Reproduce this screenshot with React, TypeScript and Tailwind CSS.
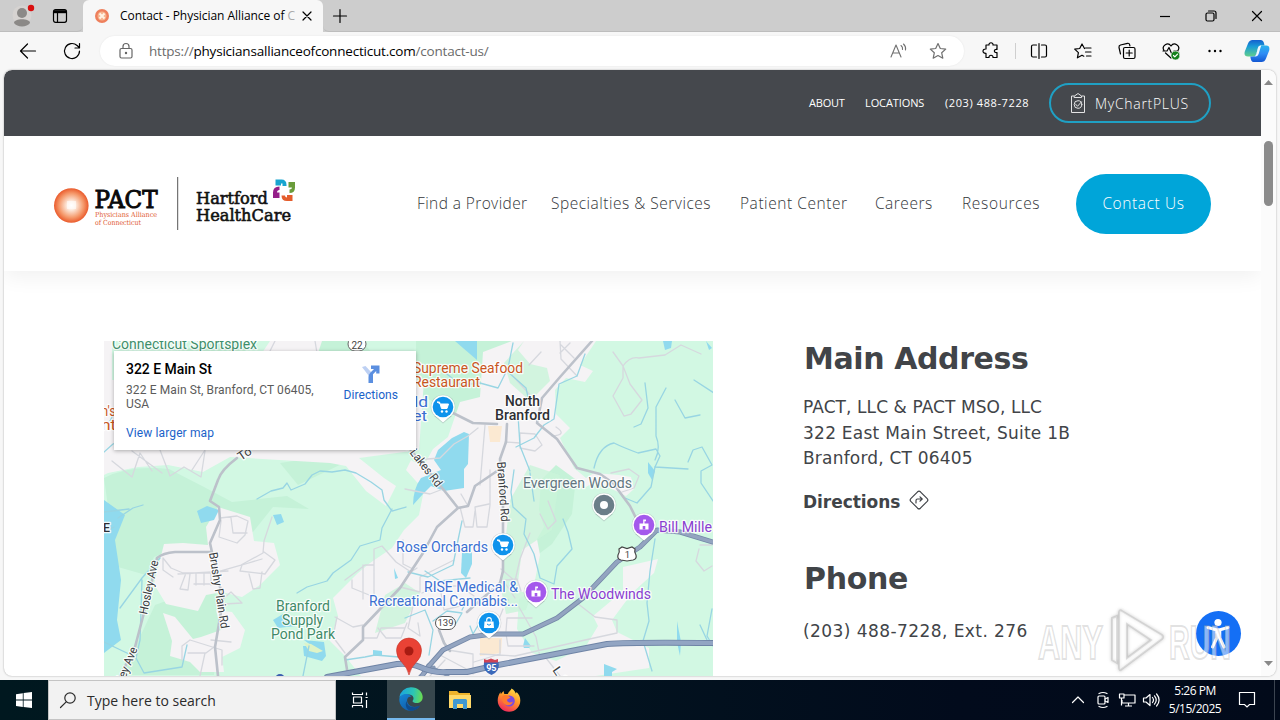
import React from 'react';

const stroke = { fill: 'none', stroke: 'currentColor', strokeWidth: 1.2, strokeLinecap: 'round', strokeLinejoin: 'round' } as const;

function Ico({ w = 20, h = 20, children, className = '' }: { w?: number; h?: number; children: React.ReactNode; className?: string }) {
  return (
    <svg width={w} height={h} viewBox={`0 0 ${w} ${h}`} className={`block shrink-0 ${className}`} {...stroke}>
      {children}
    </svg>
  );
}

function TabStrip() {
  return (
    <div className="flex h-8 items-stretch bg-[#cdcdcd] text-black">
      <div className="flex w-[83px] items-center rounded-br-md border-b border-[#bdbdbd] bg-[#cdcdcd] pl-[12px]">
        <Ico w={24} h={28}>
          <circle cx="10" cy="13" r="9.5" fill="#d6d3d1" stroke="none" />
          <circle cx="10" cy="11" r="5" fill="#8b8987" stroke="none" />
          <path d="M2 21c0-5 16-5 16 0c-3 4.500-13 4.500-16 0z" fill="#8b8987" stroke="none" />
          <circle cx="19" cy="6" r="3.200" fill="#d90f0f" stroke="none" />
        </Ico>
        <Ico w={16} h={16} className="ml-[16px]">
          <rect x="1.500" y="1.700" width="13" height="12.600" rx="2" strokeWidth="1.200" />
          <path d="M5.500 4v10" strokeWidth="1.200" />
          <path d="M2 2.200h12v3H2z" fill="currentColor" stroke="none" />
        </Ico>
      </div>
      <div className="flex w-[240px] items-center rounded-t-md bg-[#f7f7f7] pl-[12px]">
        <svg width="14" height="14" viewBox="0 0 14 14">
          <circle cx="7" cy="7" r="7" fill="#ee7f5c" />
          <circle cx="7" cy="7" r="4.500" fill="#f7b48e" />
          <path d="M4.500 4.500l5 5M9.500 4.500l-5 5" stroke="#fff3e4" strokeWidth="2" />
        </svg>
        <div className="ml-[11px] w-[175px] overflow-hidden whitespace-nowrap font-['Open_Sans','Noto_Sans',sans-serif] text-[12px] leading-4 tracking-[-0.05px]">
          Contact - Physician Alliance of <span className="text-[#aaa]">C</span>
        </div>
        <Ico w={12} h={12} className="ml-[6px]"><path d="M2 2l8 8M10 2l-8 8" /></Ico>
      </div>
      <div className="flex grow items-center rounded-bl-md border-b border-[#bdbdbd] pl-[9px]">
        <Ico w={16} h={16}><path d="M8 1.500v13M1.500 8h13" /></Ico>
        <div className="ml-auto flex items-center gap-[34px] pr-[17px]">
          <Ico w={12} h={12}><path d="M1 6.500h10" strokeLinecap="butt" /></Ico>
          <Ico w={12} h={12}><rect x="1" y="3" width="8" height="8" rx="1.500" /><path d="M3.500 1h5.500q2 0 2 2v5.500" /></Ico>
          <Ico w={12} h={12}><path d="M1.500 1.500l9 9M10.500 1.500l-9 9" /></Ico>
        </div>
      </div>
    </div>
  );
}

function Copilot() {
  return (
    <svg width="26" height="26" viewBox="0 0 26 26" className="block shrink-0">
      <defs>
        <linearGradient id="cpA" x1="0" y1="0" x2="0" y2="1"><stop offset="0" stopColor="#1460cf" /><stop offset=".4" stopColor="#1a9cd6" /><stop offset="1" stopColor="#62cf8c" /></linearGradient>
        <linearGradient id="cpB" x1="0" y1="0" x2="0" y2="1"><stop offset="0" stopColor="#2bb4ee" /><stop offset=".5" stopColor="#2f8cf5" /><stop offset="1" stopColor="#1257d2" /></linearGradient>
      </defs>
      <path d="M8.500 2h8q3 0 3.700 4l.3 1.500h-3q-2.800 0-3.600 3l-1.600 5.500q-.8 2.500-3.300 2.500H4q-4.500 0-3.200-5L4 5.500q1.300-3.500 4.500-3.500z" fill="url(#cpA)" />
      <path d="M17.500 24h-8q-2.500 0-3.200-5.500H9q2.800 0 3.500-3L14 10.500q.9-3 3.700-3h4.500q4 0 3 5L22 20.500q-1.300 3.500-4.500 3.500z" fill="url(#cpB)" />
      <path d="M14 9.500q.6-2 2.500-2h.8l-.9 2.500-1.600 5.500q-.9 3-3.400 3h-1.200q1.800-.6 2.300-3z" fill="#eef8ff" />
    </svg>
  );
}

function Toolbar() {
  return (
    <div className="flex h-[38px] items-center bg-[#f7f7f7] pl-[18px] text-black">
      <Ico><path d="M17.500 10H2.500M9.500 3L2.500 10l7 7" /></Ico>
      <Ico className="ml-[24px]"><path d="M17.500 10a7.500 7.500 0 1 1-2.400-5.500l2.400 2.300M17.500 2.500v4.500h-4.500" /></Ico>
      <div className="ml-[18px] flex h-[30px] w-[864px] items-center rounded-full bg-white pl-[16px] shadow-[0_0_2px_rgba(0,0,0,0.08)]">
        <Ico className="text-[#666]"><rect x="4" y="7.500" width="12" height="9.500" rx="1.500" /><path d="M7 7.500V5.500a3 3 0 0 1 6 0v2" /><circle cx="10" cy="12" r=".6" fill="currentColor" /></Ico>
        <div className="ml-[13px] w-[338px] whitespace-nowrap font-['Open_Sans','Noto_Sans',sans-serif] text-[13.500px] leading-5 tracking-[-0.2px] text-[#6b6b6b]">
          https://<span className="text-black">physiciansallianceofconnecticut.com</span>/contact-us/
        </div>
        <Ico className="ml-[402px] text-[#707070]"><path d="M2 16L7 4l5 12M3.700 12h6.600M12 4.500q2 1.500 1.500 4M14.500 3q2.700 2.500 2 6" strokeWidth="1.100" /></Ico>
        <Ico className="ml-[19px] text-[#707070]"><path d="M10 2.500l2.300 5 5.400.6-4 3.700 1.100 5.400L10 14.500l-4.800 2.700 1.100-5.400-4-3.700 5.400-.6z" /></Ico>
      </div>
      <Ico className="ml-[17px]"><path d="M5 4h3c-.6-3 4.600-3 4 0h4v4.500c-3.500-.5-3.500 3.500 0 3V16.500h-4c.5-3-4.500-3-4 0H5v-4.200c-4 .3-4-4.600 0-4.300z" /></Ico>
      <div className="ml-[14px] h-4 w-px bg-[#cfcfcf]" />
      <Ico className="ml-[13px]"><path d="M7.500 4H4q-1.500 0-1.500 1.500v9Q2.500 16 4 16h3.500M12.500 4H16q1.500 0 1.500 1.500v9q0 1.500-1.500 1.500h-3.500M10 2.500v15" /></Ico>
      <Ico className="ml-[24px]"><path d="M11.500 7.500L9 3 6.700 7.500l-5 .6 3.700 3.500-1 5.200L9 14.200l1.800 1M12.500 7h5.500M12.500 11h5.500M13.500 15h4.500" /></Ico>
      <Ico className="ml-[24px]"><path d="M3.500 13L2 6.500Q1.700 4.500 3.500 4l7-1.700q1.800-.3 2.200 1.500l.2 1M8 6.500h8.500q1.500 0 1.500 1.500v8q0 1.500-1.500 1.500H8q-1.500 0-1.500-1.500V8q0-1.500 1.500-1.500zM12.200 9v6M9.200 12h6" /></Ico>
      <Ico className="ml-[24px]"><path d="M3 9.500c-3-5 4-9 7-4.500 3-4.500 10-.5 7 4.500M4.500 12l5.500 5M2 10h4l2-3.500 3 7 2-3.500h4" /><circle cx="14.500" cy="14.500" r="4.500" fill="#14801c" stroke="#f7f7f7" strokeWidth=".7" /><path d="M12.500 14.500l1.300 1.400 2.700-2.700" stroke="#fff" /></Ico>
      <Ico className="ml-[24px]"><g fill="currentColor" stroke="none"><circle cx="4.500" cy="10" r="1.200" /><circle cx="10" cy="10" r="1.200" /><circle cx="15.500" cy="10" r="1.200" /></g></Ico>
      <div className="ml-[19px]"><Copilot /></div>
    </div>
  );
}

function PactLogo() {
  return (
    <svg width="246" height="56" viewBox="52 176 246 56" className="block shrink-0">
      <defs>
        <radialGradient id="sun"><stop offset="0" stopColor="#fff" /><stop offset=".25" stopColor="#fdece0" /><stop offset=".7" stopColor="#f59a6c" /><stop offset="1" stopColor="#ea5a2b" /></radialGradient>
      </defs>
      <circle cx="71.300" cy="205.500" r="17.300" fill="url(#sun)" />
      <rect x="67" y="201" width="9" height="8" fill="#fff" opacity=".5" />
      <g fontFamily="'DejaVu Serif', serif">
        <text x="94.500" y="207.500" fontSize="24" fill="#0a0a0a" stroke="#0a0a0a" strokeWidth="1" textLength="63" lengthAdjust="spacingAndGlyphs">PACT</text>
        <text x="95" y="216.800" fontSize="7" fill="#e0582f" textLength="62" lengthAdjust="spacingAndGlyphs">Physicians Alliance</text>
        <text x="95" y="224.600" fontSize="7" fill="#e0582f" textLength="46" lengthAdjust="spacingAndGlyphs">of Connecticut</text>
        <text x="196" y="204" fontSize="17" fill="#111" stroke="#111" strokeWidth=".6" textLength="72" lengthAdjust="spacingAndGlyphs">Hartford</text>
        <text x="196" y="220.500" fontSize="17" fill="#111" stroke="#111" strokeWidth=".6" textLength="95" lengthAdjust="spacingAndGlyphs">HealthCare</text>
      </g>
      <path d="M177.700 177v53" stroke="#555" strokeWidth="1" />
      <path d="M275.500 179.500h6q5 0 5 5.500v1h-4v-2.500h-1.500v2h-5.500z" fill="#18a5d0" />
      <path d="M288.500 182h6.500v5.500q0 5.500-5.500 5.500v-3.500q2.500 0 2.500-2h-3.500z" fill="#6a9c3b" />
      <path d="M279.500 186.500v3.500q-2.500 0-2.500 2.500h2.500v5.500h-6.500v-5.500q0-6 6.500-6z" fill="#951f89" />
      <path d="M292.500 195v6h-5.500q-5.500 0-5.500-5.500h3.500q0 2 2 2V195z" fill="#e45d2c" />
    </svg>
  );
}

function SiteTop() {
  return (
    <div className="relative z-10 flex h-[66px] shrink-0 items-center rounded-tl-lg bg-[#45484d] pl-[805px] font-['Open_Sans','Noto_Sans',sans-serif] text-[11px] text-white">
      <span className="w-[56px] whitespace-nowrap tracking-[-0.2px]">ABOUT</span>
      <span className="w-[80px] whitespace-nowrap tracking-[-0.1px]">LOCATIONS</span>
      <span className="w-[104px] whitespace-nowrap tracking-[0.6px]">(203) 488-7228</span>
      <div className="flex h-10 w-[162px] items-center rounded-full border-2 border-[#1fa0c4] pl-[18px]">
        <Ico w={18} h={22} className="opacity-85"><path d="M5 4H2.500v16.500h13V4H13M5.500 5.500h7V4L9 1.500 5.500 4zM6.500 12l2 2.300 4-4.500" strokeWidth="1" /><circle cx="9" cy="12.500" r="3.800" strokeWidth="1" /></Ico>
        <span className="ml-[8px] whitespace-nowrap text-[14px] font-light tracking-[0.7px]">MyChartPLUS</span>
      </div>
    </div>
  );
}

function SiteHeader() {
  return (
    <div className="flex h-[135px] shrink-0 items-center bg-white pl-[48px] font-['Open_Sans','Noto_Sans',sans-serif] text-[15.500px] font-light text-[#33363a] shadow-[0_6px_20px_rgba(0,0,0,0.06)]">
      <PactLogo />
      <nav className="ml-[119px] flex whitespace-nowrap">
        <span className="w-[134px] tracking-[0.4px]">Find a Provider</span>
        <span className="w-[189px] tracking-[0.5px]">Specialties &amp; Services</span>
        <span className="w-[135px] tracking-[0.55px]">Patient Center</span>
        <span className="w-[87px] tracking-[0.5px]">Careers</span>
        <span className="w-[114px] tracking-[0.65px]">Resources</span>
      </nav>
      <div className="flex h-[60px] w-[135px] items-center justify-center whitespace-nowrap rounded-full bg-[#00a5d9] tracking-[0.6px] text-white">Contact Us</div>
    </div>
  );
}

function Pin({ x, y, color, kind }: { x: number; y: number; color: string; kind: string }) {
  return (
    <g transform={`translate(${x} ${y})`}>
      <path d="M-9 9L0 16.500 9 9z" fill="#7d8b90" opacity=".35" />
      <circle r="12.300" fill="#7d8b90" opacity=".3" />
      <path d="M-8.500 8L0 15.500 8.500 8z" fill="#fff" />
      <circle r="11.700" fill="#fff" />
      <circle r="10.300" fill={color} />
      {kind === 'cart' && <g><path d="M-6-5h2.500l2 6.500h5.500l1.500-4.500h-8z" fill="#fff" stroke="#fff" strokeWidth="1" strokeLinejoin="round" /><circle cx="-1" cy="4.500" r="1.200" fill="#fff" /><circle cx="3.500" cy="4.500" r="1.200" fill="#fff" /></g>}
      {kind === 'dot' && <circle r="4" fill="#fff" />}
      {kind === 'civic' && <g><path d="M-4.500-1.500h9V4.500h-9zM-.8-1.500V-5.500H2v1.800H.5v2.200z" fill="#fff" /><rect x="-1.300" y="1" width="2.600" height="3.500" fill={color} /></g>}
      {kind === 'bag' && <g><path d="M-4.500-1.500h9l.5 6.500h-10z" fill="#fff" /><path d="M-2.300-1.500v-1.500a2.300 2.300 0 0 1 4.600 0v1.500" fill="none" stroke="#fff" strokeWidth="1.200" /><path d="M-2 1q2 2.500 4 0" fill="none" stroke={color} /></g>}
    </g>
  );
}

function L({ x, y, w, c, s = 14, children, b = false, t }: { x: number; y: number; w: number; c: string; s?: number; children: string; b?: boolean; t?: string }) {
  return (
    <text x={x} y={y} textLength={w} lengthAdjust="spacingAndGlyphs" fontSize={s} fill={c} fontWeight={b ? 500 : 400} stroke="#fff" strokeOpacity=".85" strokeWidth="2.500" paintOrder="stroke" strokeLinejoin="round" transform={t}>
      {children}
    </text>
  );
}

const built = [
  'M104 341h8v40h-8zM104 380h320l-5 70-60 8 25 20 12 8-10 20-20-15-20-25-16-3-100-6-27 15-35-7-30 2-30 6-14 7z',
  'M270 341h52l-4 12h-56z',
  'M512 341h84l-16 24 13 6-8 11-19 -4-11 12 1 24 14 14-10 10 14 30 12 10 8-5 25 2 12 2 3 12-8 7-30-15-10 6-30-22-15 15-2 30 5 17-7 12 3 16-7 35-14 9-2 30 15 24 24 8 30-15 12-20-5-10 30-25 0-24 35-8-4 14-22 20-20 27 5 12 32 16 0 20-80 12-65 13-15 12h-52l-110 0 5-15 33-9-20-25-15-15 8-25-5-18 25-25 12-10 22-15 12-18 15-15 5-25-18-20 5-10 12 7 10-18 15-12 12-35 20-5 3-45z',
  'M183 543l25 2-2-18 12-20 32 10 4 24 20 2 6 22-20 20-18 12-20-5-16 3-8 16-32-7-12-20 10-40z',
  'M163 613l12 4 18 22 8-2 20-7-5-20 16 2 13 18-5 18-18 9 2 15h-24l-10-10-20-6 2-15z',
];
const woods = [
  'M104 478q25-13 65-9l35 18 28 15 55-6 22 13-36-2-20 25-31 6-9 8-30 0-29 11-8 18-28-8-5-25z',
  'M225 341h30l-20 20-110 0zM320 341h42l10 12h-62z',
  'M416 341h95l-6 60-14 25-40-14-35-20z',
  'M517 467l25-8 35 10-5 45-20 30-20 15-17-45z',
  'M155 605l55-20 10 15-6 75h-92z',
  'M280 463l40-6 28 4-50 24z',
];
const water = [
  'M104 500l21 15-10 25 6 40-4 40 4 20-17 13z',
  'M197 511l10-5 12 4-5 10-13 3z', 'M273 515l8-1 3 8-7 3z',
  'M464 432l5 2-1 30-4 5 0 19-20 3-13-5-8 8-10 11q0-16 8-27l20-8-7-10 4-10 14-12z',
  'M455 341h22v19l-14-12z', 'M663 341h9l-1 7-6 2z', 'M706 341l6 7-3 2z',
  'M462 553l10-1 0 12-6 14-5-5z', 'M304 640l20 2 2 14-4 5-18-5-1-10 9 0z',
  'M273 620l10-6 13 12-18 2z', 'M523 646l2-8 6 8-2 2h-5z',
  'M604 664l13 5-5 3 0 4h-8z', 'M677 621l4 21-1 14-3-14z', 'M394 568l4 10-3 1z',
  'M373 650l9 1 0 4-9 0z', 'M648 462l7 9-3 9-4-7z',
];
const creeks = [
  'M257 499l14-8 12-3 4-5 4 7 14-6 7-9 8-4 12 1 13-2 11 3 15 9 11 8 2 10 8 11 14-4',
  'M392 509l-10 19-2 12-20 6-9 14-18 13-6 8-20 6-10 6',
  'M104 532l10-5M118 518l15-10 10-3M104 512l25-3M104 424l6-3 4-8M104 452l9-8 12-4',
  'M513 343l-5 25-10 20-18-5-19 2-22-17M508 372l18 16 4 18M585 354l-8 22-18 8-5 35-10 6-10 13-18 9M518 415l2 31 10 25',
  'M530 473l4 28M514 470l-3 22 2 15 13 12-2 15 10 20 6 24 14 6 3-18 15-17-4-17-5-13',
  'M594 468q5-22 20-25 8 4 24 10l18-4 4 7-5 11 33 2M655 460q6-12 1-24v-29l10-19M645 383l3 25-7 16-7 3M675 400l10 18 15-3M694 380l20 13',
  'M688 462l5-12 9-3 10 18-11 6 0 12 12 18M655 467l-4 20-14 16-12-5M655 539l-5 32-3 32 2 18-6 20 9 30',
  'M712 609l-5 27 6 10M700 625l7 15M120 608l22-30 18-20M142 580l-2 60-4 18 8 15 38-6 5-22M104 642l25 12',
  'M345 660l20-3 10-2 24 2 18-5M405 618l20-8 8 20-4 25M433 621l14-10 15 2-7 12M303 676l6-30M408 572l20 5 25-12 4-20 5-24',
  'M462 610l6-12 40 2M425 571l15 10 30-3M480 622l-7 12-3-8',
];
const lanes = [
  'M112 461l20 16 8-24 12 18M132 451l30 22M160 450l10 26 14-9 17 10 4-26M205 450l-13 20',
  'M220 518l17-2 11 5-3 14-8 8-18-6 2-16M231 518l2 15h14M272 517l-8 24-1 12-22 12-28 8-30 0-12-5-8-10 0 12 10 7M264 552l11 8-10 14-25-3 2-6 20-6M249 574l4 15 7-1 2-16M178 574l50-3M186 573l-6 16 8 1 2-16M196 573v12M204 573v12M211 573v12M218 573v11h-24',
  'M182 660v-14l8-6 32 10 0 15M188 653l18 0 8-6M200 676l5-23M216 605l15-13 11 11-18 1M211 640l20 2',
  'M345 580l20-15 9 0v32l-22-9 0-8M363 565v34M374 565v-16l8-3 14 16 15 10 6-4M337 617l-4 20 12 16M335 617l18 10 10-2M364 638h13l4-10 24 0M378 628l8 10 15 0 6-15',
  'M415 460l25-2 14-14 14-8 10-8M530 395l-18-20M541 352l-12 13M560 353l10-10M574 358l-13-13M560 341l1 18 16 17M556 427q12 8-4 9M520 433v15l15 3 7-6-7-11zM505 442l15 1M503 415l16 5',
  'M613 352l10 14 0 12-10 18 11 20 7-2 11-14-12-16-7-18q7-10 16-8l26-3 16-10 20 9',
  'M485 425l-5 60M490 470v35l-3 22h-10l-2-20 14-3M460 507l5 20h8l2-16M443 489l-13 5-25-5M468 506l-7-12M444 490l10 12',
  'M611 473l18-4 10 7-5 12-12 4M548 501l8 20-8 8-8-15M530 533l-10 26-5 22-14-12M505 580l12-1 4 12M503 580l12 18',
  'M422 593l18-7 20 0 14 10M400 587l20 5 0-15 14-7 20-10M413 606l-5 22 12 8-2-13M440 587l4 23 16-4M403 540v24l10 5',
  'M439 630l9 20 25 4 0 20M503 609l-10 25M519 607l17 30 4 20M507 618h25M507 618l-1 13M506 634l2 12h26M480 654l35 2 70-16 32-7 0-13-22-3-18-14M440 655l34 18M546 658l14 18M500 640v14l-26 8',
  'M700 545h12M699 549l-3 12 8 10 8-5M275 341l-6 12M315 341l2 12M430 676l15-16',
];
const roads = [
  'M237 458q-16 12-19 22l-8 21 9 6 1 13-10 23 3 14 10 43-8 47 3 29',
  'M210 552h-35q-12 1-18 6l-7 32-15 57-15 29',
  'M592 341l-32 36-18 21-5 25 20 16 20 29 23 6 13 9 17 23 7 14',
  'M443 404l10 9 20 10 24 1M507 424l-1 18-6 17 3 44v68l-3 12-33 29',
  'M410 449l33 40 15 19 10-2 7-20 25-17M458 508l-21 19-14 26-23 35-37 39v13l-18 17 3 19',
  'M439 630l5 13 6 8',
];
const us1 = 'M422 676l6-9 15-17 27-13 23-3h30l34-16 26-20 34-36 23-15 17-17 23 2 33 10';
const i95 = 'M327 677l70-13q14-1 23 3 13 6 27 5h20l26-6 47-9 67-13q25-2 106-1';

function MapArt() {
  return (
    <svg width="609" height="335" viewBox="104 341 609 335" className="block" fontFamily="Roboto, 'Liberation Sans', sans-serif">
      <rect x="104" y="341" width="609" height="335" fill="#d2f8e3" />
      {woods.map((d) => <path key={d} d={d} fill="#c5f2d8" />)}
      {built.map((d) => <path key={d} d={d} fill="#f5f3f5" />)}
      <path d="M524 341l-20 22 6 20 20 18 20-20-3-13-17-4-12-14zM385 595l20-12 15 10-15 30-30 10zM510 500l20-35 30 10-8 55-30 20-5 40 14 5-5 15-20 4-6-30 5-40z" fill="#c9f4da" opacity=".8" />
      <path d="M488 426h14l-2 16h-10zM480 638h22l-1 15-21 3z" fill="#fbe9d2" />
      {water.map((d) => <path key={d} d={d} fill="#90daee" />)}
      <path d="M304 643l7 1 12 7-6 2-8-2z" fill="#dff3c6" />
      <g fill="none" strokeLinejoin="round" strokeLinecap="round">
        {lanes.map((d) => <path key={d} d={d} stroke="#d6d8de" strokeWidth="1.300" />)}
        {creeks.map((d) => <path key={d} d={d} stroke="#98d5e3" strokeWidth="1.300" />)}
        {roads.map((d) => <path key={d} d={d} stroke="#bcc1ca" strokeWidth="2.600" />)}
        <path d="M428 665l20 11M420 676l14-9" stroke="#8799b5" strokeWidth="3" />
        <path d={us1} stroke="#7488a8" strokeWidth="5" /><path d={us1} stroke="#93a4c0" strokeWidth="3.400" />
        <path d={i95} stroke="#6f84a6" strokeWidth="6" /><path d={i95} stroke="#92a5c3" strokeWidth="4.200" />
      </g>
      <L x={112} y={349} w={145} c="#3f8f6b">Connecticut Sportsplex</L>
      <L x={413} y={373} w={110} c="#c9561e">Supreme Seafood</L>
      <L x={413} y={387} w={67} c="#c9561e">Restaurant</L>
      <L x={408} y={407} w={20} c="#3b6fd1">rld</L>
      <L x={404} y={421} w={23} c="#3b6fd1">ket</L>
      <L x={505} y={406} w={35} c="#2d2f33" b>North</L>
      <L x={495} y={420} w={55} c="#2d2f33" b>Branford</L>
      <L x={523} y={488} w={109} c="#627680">Evergreen Woods</L>
      <L x={659} y={532} w={53} c="#8a3fd0">Bill Mille</L>
      <L x={396} y={552} w={92} c="#3b6fd1">Rose Orchards</L>
      <L x={424} y={592} w={94} c="#3b6fd1">RISE Medical &amp;</L>
      <L x={369} y={606} w={149} c="#3b6fd1">Recreational Cannabis...</L>
      <L x={551} y={599} w={100} c="#8a3fd0">The Woodwinds</L>
      <L x={276} y={611} w={54} c="#3f8a68">Branford</L>
      <L x={282} y={625} w={41} c="#3f8a68">Supply</L>
      <L x={271} y={639} w={64} c="#3f8a68">Pond Park</L>
      <L x={94} y={416} w={22} c="#c9561e">an's</L>
      <L x={92} y={430} w={24} c="#c9561e">ant</L>
      <L x={103} y={532} w={7} c="#2d2f33" s={12} b>E</L>
      <L x={0} y={0} w={14} c="#3a3d42" s={12} t="translate(241 461) rotate(-34)">To</L>
      <L x={0} y={0} w={53} c="#3a3d42" s={12} t="translate(404 446) rotate(52)">h Lakes Rd</L>
      <L x={0} y={0} w={60} c="#3a3d42" s={12} t="translate(497 462) rotate(86)">Branford Rd</L>
      <L x={0} y={0} w={55} c="#3a3d42" s={12} t="translate(147 615) rotate(-78)">Hosley Ave</L>
      <L x={0} y={0} w={55} c="#3a3d42" s={12} t="translate(117 700) rotate(-68)">Hosley Ave</L>
      <L x={0} y={0} w={77} c="#3a3d42" s={12} t="translate(209 553) rotate(81)">Brushy Plain Rd</L>
      <L x={0} y={0} w={20} c="#3a3d42" s={12} t="translate(552 670) rotate(55)">L S</L>
      <g fontSize="9.500" fill="#444" textAnchor="middle">
        <rect x="348" y="337" width="18" height="14" rx="7" fill="#fff" stroke="#666" /><text x="357" y="348.500" fontSize="10">22</text>
        <rect x="435.500" y="616.500" width="20" height="13" rx="6.500" fill="#fff" stroke="#555" /><text x="445.500" y="626.300">139</text>
        <path d="M619 549l3-2 5 1.500 5-1.500 3 2q-1 3 1 6 1 4-3 5l-6 1-6-1q-4-1-3-5 2-3 1-6z" fill="#fff" stroke="#444" strokeWidth="1.200" />
        <text x="627.500" y="558">1</text>
      </g>
      <path d="M484 662q-2 9 7.500 13 9-4 7-13z" fill="#3b68ba" /><path d="M484 659l3 1 4-1.500 4 1.500 3-1v3.500h-14z" fill="#cf4355" />
      <text x="491.300" y="671" textAnchor="middle" fontSize="9" fontWeight="700" fill="#fff">95</text>
      <circle cx="280" cy="679" r="5" fill="#3b5fae" />
      <Pin x={443} y={407} color="#0f93ec" kind="cart" />
      <Pin x={604} y={505} color="#6b7e89" kind="dot" />
      <Pin x={644} y={525} color="#a458ec" kind="civic" />
      <Pin x={503} y={545} color="#0f93ec" kind="cart" />
      <Pin x={536} y={592} color="#a458ec" kind="civic" />
      <Pin x={489} y={623} color="#0f93ec" kind="bag" />
      <path d="M409 675q-1.500-7-7-12.500-5.500-5-5.500-12a12.500 12.500 0 0 1 25 0q0 7-5.500 12-5.500 5.500-7 12.500z" fill="#e94235" stroke="#c5352a" strokeWidth=".6" />
      <circle cx="409" cy="651" r="4.500" fill="#a81b12" />
    </svg>
  );
}

function PlaceCard() {
  return (
    <div className="absolute left-[10px] top-[10px] flex h-[99px] w-[302px] justify-between bg-white pl-3 pr-[18px] pt-[9px] font-[Roboto,'Liberation_Sans',sans-serif] text-[12px] shadow-[0_1px_4px_rgba(0,0,0,0.3)]">
      <div className="w-[200px] whitespace-nowrap">
        <div className="text-[14px] font-medium leading-[18px] tracking-[-0.05px] text-black">322 E Main St</div>
        <div className="mt-[5px] leading-[14px] tracking-[0.11px] text-[#5b5b5b]">322 E Main St, Branford, CT 06405,<br />USA</div>
        <div className="mt-[15px] leading-[14px] tracking-[0.12px] text-[#1a62c9]">View larger map</div>
      </div>
      <div className="flex flex-col items-center text-[#1a62c9]">
        <svg width="20" height="20" viewBox="0 0 20 20" className="mt-[4px]">
          <path d="M1 3l3.500-1 6 6.500-3 3z" fill="#bdd0f3" />
          <path d="M7.500 19v-6q0-2.500 2-4.500l3.500-3.500h-3V1.500h8.500v8h-3.300V7l-3.200 3.200V19z" fill="#5b8fe0" />
        </svg>
        <span className="mt-[4px] leading-[14px] tracking-[0.05px]">Directions</span>
      </div>
    </div>
  );
}

function Contact() {
  return (
    <div className="ml-[90px] whitespace-nowrap pt-px font-['DejaVu_Sans',sans-serif] text-[#414448]">
      <h1 className="pl-px text-[30px] font-bold leading-[34px] tracking-[-0.4px]">Main Address</h1>
      <p className="mt-[19px] text-[17px] leading-[25.500px]">
        <span className="tracking-[0.08px]">PACT, LLC &amp; PACT MSO, LLC</span><br />
        <span className="tracking-[0.25px]">322 East Main Street, Suite 1B</span><br />
        <span className="tracking-[0.2px]">Branford, CT 06405</span>
      </p>
      <div className="mt-[17px] flex items-center text-[17px] font-bold leading-[26px]">
        <span className="w-[106px] tracking-[-0.05px]">Directions</span>
        <Ico w={20} h={20} className="-mt-[4px]"><path d="M8.600 1.800Q10 .5 11.400 1.800l6.800 6.800q1.300 1.400 0 2.800l-6.800 6.800q-1.400 1.300-2.800 0l-6.800-6.800q-1.300-1.400 0-2.800zM7 13v-2.500Q7 9 8.500 9H13M11 6.800L13.200 9 11 11.200" /></Ico>
      </div>
      <h1 className="mt-[47px] pl-px text-[30px] font-bold leading-[34px] tracking-[-0.3px]">Phone</h1>
      <p className="mt-[23px] text-[17px] leading-[25.500px] tracking-[0.43px]">(203) 488-7228, Ext. 276</p>
    </div>
  );
}

function ScrollRail() {
  return (
    <div className="flex w-[15px] shrink-0 flex-col items-center rounded-r-lg bg-[#fbfbfb] py-[10px]">
      <svg width="9" height="5" viewBox="0 0 9 5"><path d="M4.500 0L9 5H0z" fill="#888" /></svg>
      <div className="mt-[56px] h-[65px] w-[9px] rounded-full bg-[#8b8b8b]" />
      <svg width="9" height="5" viewBox="0 0 9 5" className="mt-auto"><path d="M4.500 5L9 0H0z" fill="#888" /></svg>
    </div>
  );
}

function Overlay() {
  return (
    <svg width="210" height="70" viewBox="1032 606 210 70" className="absolute left-[1032px] top-[606px]" fontFamily="'Liberation Sans', sans-serif">
      <defs><filter id="glow" x="-10%" y="-20%" width="120%" height="140%"><feGaussianBlur stdDeviation="1.500" /></filter></defs>
      <circle cx="1218.500" cy="633.500" r="22.500" fill="#146ff5" />
      <circle cx="1218" cy="622.500" r="3.600" fill="#fff" />
      <path d="M1208 627.500l8 2.200h4l8-2.200M1216.800 630v8l-4.300 9M1219.800 630v8l4.300 9" fill="none" stroke="#fff" strokeWidth="3" strokeLinecap="round" strokeLinejoin="round" />
      <path d="M1216 629h5v9h-5z" fill="#fff" />
      <g fill="none" stroke="#8f8f8f" strokeOpacity=".4" strokeWidth="2.500" filter="url(#glow)">
        <path d="M1122 611l40 24q2 2 0 4l-40 30q-3 3-3-2v-54q0-4 3-2zM1127 624v34l24-18zM1112 618v42l6 3M1112 618l6-2" />
      </g>
      <g fill="#fff" fillOpacity=".5" stroke="#a4a4a4" strokeOpacity=".32" strokeWidth="2" fontSize="48" fontWeight="700">
        <text x="1038" y="659" textLength="65" lengthAdjust="spacingAndGlyphs">ANY</text>
        <text x="1169" y="659" textLength="62" lengthAdjust="spacingAndGlyphs">RUN</text>
        <path d="M1122 611l40 24q2 2 0 4l-40 30q-3 3-3-2v-54q0-4 3-2zM1127 624v34l24-18z" fillRule="evenodd" />
        <path d="M1112 618l5-2v47l-5-3z" />
      </g>
    </svg>
  );
}

function EdgeLogo() {
  return (
    <svg width="24" height="24" viewBox="0 0 24 24">
      <defs>
        <linearGradient id="eg1" x1="0" x2="1" y1=".3" y2=".4"><stop offset="0" stopColor="#1ba3e0" /><stop offset=".6" stopColor="#2cc5b4" /><stop offset="1" stopColor="#69db52" /></linearGradient>
        <linearGradient id="eg2" x1="0" x2=".7" y1="0" y2="1"><stop offset="0" stopColor="#1686d5" /><stop offset="1" stopColor="#1159a6" /></linearGradient>
      </defs>
      <path d="M.3 11A11.700 11.700 0 0 1 12 .3c7 0 11.700 5 11.700 9.700 0 4-3 6-6 6-3.500 0-4.500-1.500-4-2.200 2-2.500.3-6.300-3.700-6.300C5 7.500 1.500 9 .3 11z" fill="url(#eg1)" />
      <path d="M.3 12C1 8 6 6 9.500 7.500c2 .8 3 2 3 2-4 0-5 3-4 6 1.500 4 6.500 6 12.500 3C18 23 14.500 23.700 11 23.700 5 23.500 0 18.500.3 12z" fill="url(#eg2)" />
      <path d="M8 14c-1 5 6 8.500 13 4.500-2 4-6 5.300-9.500 5.200C6 22 6 16 8 14z" fill="#104b8c" />
    </svg>
  );
}

function FirefoxLogo() {
  return (
    <svg width="24" height="24" viewBox="0 0 24 24">
      <defs><linearGradient id="ff" x1=".8" x2=".3" y1="0" y2="1"><stop offset="0" stopColor="#ffe14a" /><stop offset=".45" stopColor="#ff9a2a" /><stop offset="1" stopColor="#f0265c" /></linearGradient></defs>
      <path d="M14.500.5c3 1.500 4 4 4.200 5 .8-.4.800-1.500.8-1.500C22 6 23.300 9 23.300 12.500A11.200 11.200 0 0 1 12 23.700 11.300 11.300 0 0 1 .7 12.500C.7 9 2 6 3.500 4c0 1 .4 2 .4 2L6.500 3l.8 3h3.500C12 3 14 2.500 14.500.5z" fill="url(#ff)" />
      <circle cx="12.300" cy="13" r="5.500" fill="#7a4be0" />
      <path d="M5.500 8c2-1.500 4.500-1 6 0l2 1.500c-1 1.200-3 1-3.500 2.500 0 2.500 3.500 3.500 6 1.500-1 4-6.500 5-9 2-2-2-2.500-5-1.500-7.500z" fill="#ff7b2e" />
    </svg>
  );
}

function Taskbar() {
  return (
    <div className="flex h-10 bg-[linear-gradient(90deg,#00181f_0%,#02131f_45%,#020b1c_75%,#020a1a_100%)] font-['Open_Sans','Noto_Sans',sans-serif] text-white">
      <div className="flex w-12 items-center justify-center">
        <svg width="16" height="16" viewBox="0 0 16 16"><path d="M0 2.200l6.800-1v6.400H0zM7.600 1.100L16 0v7.600H7.600zM0 8.400h6.800v6.500L0 13.900zM7.600 8.400H16V16l-8.400-1.100z" fill="#fff" /></svg>
      </div>
      <div className="flex w-[288px] items-center border border-[#c4c4c4] bg-[#f2f2f2] pl-[10px] text-[#2b2b2b]">
        <Ico w={18} h={18}><circle cx="11" cy="7" r="5.200" /><path d="M7.200 10.800L1.500 16.500" /></Ico>
        <span className="ml-[10px] whitespace-nowrap text-[14px]">Type here to search</span>
      </div>
      <div className="flex w-[51px] items-center justify-center pr-[4px]">
        <Ico w={18} h={18}><path d="M1.500 1.500v2h10v-2M1.500 16.500v-2h10v2M2.500 6h8v6h-8zM15.500 1.500v3M15.500 9v8M14.500 6.500h2.200" strokeLinecap="butt" /></Ico>
      </div>
      <div className="flex w-12 items-center justify-center border-b-2 border-[#76b9ed] bg-[#37474d]"><EdgeLogo /></div>
      <div className="flex w-[49px] items-center justify-center">
        <svg width="22" height="20" viewBox="0 0 22 20"><path d="M0 1h8l2 2h11v15H0z" fill="#eeb32b" /><path d="M0 5h22v13H0z" fill="#ffd969" /><path d="M4 10.500Q4 9 5.500 9h11Q18 9 18 10.500V19h-4v-5H8v5H4z" fill="#3f98d0" /></svg>
      </div>
      <div className="flex w-[49px] items-center justify-center"><FirefoxLogo /></div>
      <div className="ml-auto flex items-center">
        <Ico w={14} h={14}><path d="M1.500 9.500L7 4l5.500 5.500" /></Ico>
        <Ico w={16} h={18} className="ml-[10px]"><rect x="3" y="5" width="7" height="8" rx="1" /><path d="M10 8l3-1.500v5L10 10M4 2.500q4-2 8 0M4 15.500q4 2 8 0" /></Ico>
        <Ico w={18} h={16} className="ml-[7px]"><path d="M6 3h11v8H4V8M1.500 2h4.500v4h-4.500zM3.500 6v7.500M10.500 11v3M7 14h7" strokeLinecap="butt" /></Ico>
        <Ico w={18} h={16} className="ml-[6px]"><path d="M1.500 6v4h2.500l4 3.500v-11L4 6zM10.500 5.500q2 2.500 0 5M12.500 3.800q3.500 4.200 0 8.400M14.600 2q5 6 0 12" /></Ico>
        <div className="ml-[6px] flex w-[58px] flex-col items-center whitespace-nowrap text-[12px] leading-[18px] tracking-[-0.5px]"><span>5:26 PM</span><span>5/15/2025</span></div>
        <Ico w={18} h={18} className="ml-[14px]"><path d="M1.500 1.500h15v12h-5L9 16l-2.500-2.500h-5z" strokeLinejoin="miter" /></Ico>
        <div className="ml-[18px] h-10 w-[6px] border-l border-[#3c4450]" />
      </div>
    </div>
  );
}

export default function App() {
  return (
    <div className="relative flex h-[720px] w-[1280px] flex-col overflow-hidden bg-[#f7f7f7]">
      <TabStrip />
      <Toolbar />
      <div className="mx-1 mb-1 flex h-[606px] overflow-hidden rounded-lg bg-white shadow-[0_0_2px_rgba(0,0,0,0.35)]">
        <div className="flex w-[1257px] shrink-0 flex-col overflow-hidden">
          <SiteTop />
          <SiteHeader />
          <div className="flex pl-[100px] pt-[70px]">
            <div className="relative h-[335px] w-[609px] shrink-0 overflow-hidden">
              <MapArt />
              <PlaceCard />
            </div>
            <Contact />
          </div>
        </div>
        <ScrollRail />
      </div>
      <Taskbar />
      <Overlay />
    </div>
  );
}
